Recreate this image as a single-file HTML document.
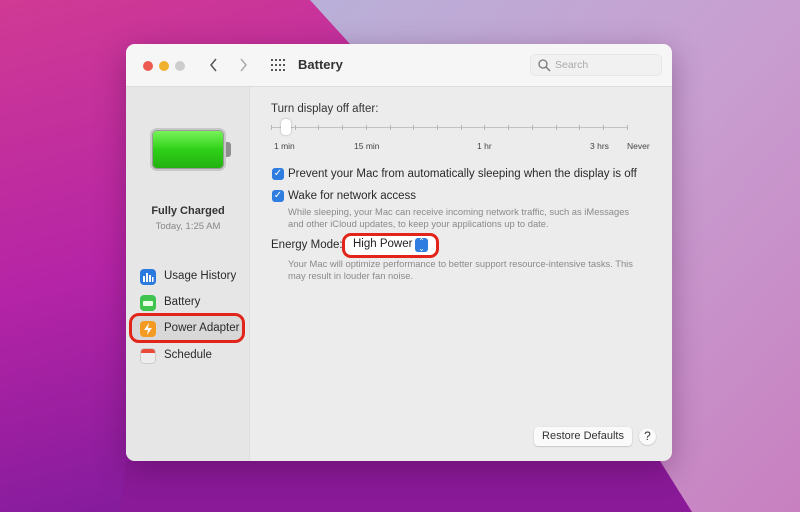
<!DOCTYPE html>
<html><head><meta charset="utf-8"><style>
*{margin:0;padding:0;box-sizing:border-box}
body{width:800px;height:512px;overflow:hidden;position:relative;font-family:"Liberation Sans",sans-serif;color:#2a2a2a}
.abs{position:absolute}
.win{left:126px;top:44px;width:546px;height:417px;border-radius:9px;background:#ececec;overflow:hidden;box-shadow:0 8px 30px rgba(60,0,60,.35)}
.title{left:0;top:0;width:546px;height:43px;background:#f6f6f6;border-bottom:1px solid #dcdcdc}
.side{left:0;top:43px;width:124px;height:374px;background:#e6e6e6;border-right:1px solid #dedede}
.t13{font-size:11.5px;white-space:nowrap}
.g{color:#8a8a8a;font-size:9.4px;line-height:12px;white-space:nowrap}
.cb{width:12px;height:12px;border-radius:3px;background:#2f7de1;color:#fff;font-size:10px;line-height:12px;text-align:center}
.tick{width:1px;height:5px;background:#b5b5b5;top:125px}
.lbl{font-size:8.5px;color:#444;top:141px;white-space:nowrap}
.ic{width:16px;height:16px;border-radius:4px}
</style></head><body>
<svg class="abs" style="left:0;top:0" width="800" height="512">
<defs>
<linearGradient id="a" x1="0" y1="0" x2="0.4" y2="1"><stop offset="0" stop-color="#d03a94"/><stop offset=".5" stop-color="#b524a6"/><stop offset="1" stop-color="#7a1a9a"/></linearGradient>
<linearGradient id="b" x1="0" y1="0" x2="1" y2="1"><stop offset="0" stop-color="#b9b0d8"/><stop offset=".5" stop-color="#c89ed0"/><stop offset="1" stop-color="#c880c0"/></linearGradient>
</defs>
<rect width="800" height="512" fill="url(#a)"/>
<polygon points="310,0 800,0 800,512 690,512 660,461 400,400 350,44" fill="url(#b)"/>
<polygon points="126,461 660,461 692,512 120,512" fill="#8a1a98"/>
</svg>
<div class="abs win">
 <div class="abs title">
  <div class="abs" style="left:17px;top:17px;width:10px;height:10px;border-radius:5px;background:#ec5a52"></div>
  <div class="abs" style="left:33px;top:17px;width:10px;height:10px;border-radius:5px;background:#f0b12f"></div>
  <div class="abs" style="left:49px;top:17px;width:10px;height:10px;border-radius:5px;background:#cdcdcd"></div>
  <svg class="abs" style="left:82px;top:13px" width="40" height="16"><path d="M8 2 L3 8 L8 14" stroke="#555" stroke-width="1.5" fill="none"/><path d="M33 2 L38 8 L33 14" stroke="#aaa" stroke-width="1.5" fill="none"/></svg>
  <svg class="abs" style="left:145px;top:15px" width="14" height="12" fill="#555"><g><rect x="0" y="0" width="2" height="2"/><rect x="4" y="0" width="2" height="2"/><rect x="8" y="0" width="2" height="2"/><rect x="12" y="0" width="2" height="2"/><rect x="0" y="5" width="2" height="2"/><rect x="4" y="5" width="2" height="2"/><rect x="8" y="5" width="2" height="2"/><rect x="12" y="5" width="2" height="2"/><rect x="0" y="10" width="2" height="2"/><rect x="4" y="10" width="2" height="2"/><rect x="8" y="10" width="2" height="2"/><rect x="12" y="10" width="2" height="2"/></g></svg>
  <div class="abs" style="left:172px;top:13px;font-size:13px;font-weight:bold;color:#333">Battery</div>
  <div class="abs" style="left:404px;top:10px;width:132px;height:22px;border-radius:5px;background:#f1f1f1;border:1px solid #e6e6e6"></div>
  <svg class="abs" style="left:412px;top:15px" width="13" height="13"><circle cx="5" cy="5" r="4" stroke="#777" stroke-width="1.3" fill="none"/><path d="M8 8 L12 12" stroke="#777" stroke-width="1.4"/></svg>
  <div class="abs" style="left:429px;top:15px;font-size:10.5px;color:#aaa">Search</div>
 </div>
 <div class="abs side">
  <div class="abs" style="left:24px;top:41px;width:76px;height:43px;border-radius:7px;background:linear-gradient(#7df55e,#2fd018 50%,#23b010);border:2px solid #c8c8c8;box-shadow:inset 0 0 0 1px #9a9a9a"></div>
  <div class="abs" style="left:100px;top:55px;width:5px;height:15px;border-radius:0 3px 3px 0;background:#8e8e8e"></div>
  <div class="abs" style="left:0;width:124px;top:118px;text-align:center;font-size:11px;font-weight:bold;color:#333">Fully Charged</div>
  <div class="abs" style="left:0;width:124px;top:134px;text-align:center;font-size:9.5px;color:#888">Today, 1:25 AM</div>
  <div class="abs" style="left:3px;top:226px;width:116px;height:30px;border:3.5px solid #e2251a;border-radius:10px;background:#d8d8d8"></div>
  <div class="abs ic" style="left:14px;top:182px;background:#2b7ae0"><svg width="16" height="16"><g fill="#fff"><rect x="3" y="7" width="2" height="6"/><rect x="6" y="4" width="2" height="9"/><rect x="9" y="6" width="2" height="7"/><rect x="12" y="8" width="1.5" height="5"/></g></svg></div>
  <div class="abs t13" style="left:38px;top:183px">Usage History</div>
  <div class="abs ic" style="left:14px;top:208px;background:#3fc54f"><div class="abs" style="left:3px;top:6px;width:10px;height:5px;background:#e8ffe8;border-radius:1px"></div></div>
  <div class="abs t13" style="left:38px;top:209px">Battery</div>
  <div class="abs ic" style="left:14px;top:234px;background:#f39a22"><svg width="16" height="16"><path d="M9 2 L4 9 H8 L7 14 L12 7 H8 Z" fill="#fff"/></svg></div>
  <div class="abs t13" style="left:38px;top:235px">Power Adapter</div>
  <div class="abs ic" style="left:14px;top:261px;background:#eee;border:1px solid #ccc"><div style="height:4px;background:#e84a3c;border-radius:3px 3px 0 0"></div></div>
  <div class="abs t13" style="left:38px;top:262px">Schedule</div>
 </div>
 <div class="abs" style="left:145px;top:59px;font-size:11.5px;color:#333">Turn display off after:</div>
 <div class="abs" style="left:145px;top:83px;width:356px;height:1px;background:#c2c2c2"></div>
</div>
<div class="abs" style="left:281px;top:119px;width:10px;height:16px;border-radius:4px;background:#fff;box-shadow:0 0 2px rgba(0,0,0,.3)"></div>
<div class="abs lbl" style="left:274px">1 min</div>
<div class="abs lbl" style="left:354px">15 min</div>
<div class="abs lbl" style="left:477px">1 hr</div>
<div class="abs lbl" style="left:590px">3 hrs</div>
<div class="abs lbl" style="left:627px">Never</div>
<div class="abs cb" style="left:272px;top:168px">✓</div>
<div class="abs t13" style="left:288px;top:168px">Prevent your Mac from automatically sleeping when the display is off</div>
<div class="abs cb" style="left:272px;top:190px">✓</div>
<div class="abs t13" style="left:288px;top:190px">Wake for network access</div>
<div class="abs g" style="left:288px;top:206px">While sleeping, your Mac can receive incoming network traffic, such as iMessages<br>and other iCloud updates, to keep your applications up to date.</div>
<div class="abs t13" style="left:271px;top:239px">Energy Mode:</div>
<div class="abs" style="left:342px;top:233px;width:97px;height:25px;border:3.5px solid #e2251a;border-radius:9px;background:#fff"></div>
<div class="abs t13" style="left:353px;top:238px;color:#222">High Power</div>
<div class="abs" style="left:415px;top:238px;width:13px;height:14px;border-radius:3px;background:#2f7de1;color:#fff;font-size:8px;line-height:7px;text-align:center">⌃<br>⌄</div>
<div class="abs g" style="left:288px;top:258px">Your Mac will optimize performance to better support resource-intensive tasks. This<br>may result in louder fan noise.</div>
<div class="abs" style="left:534px;top:427px;width:98px;height:19px;border-radius:4px;background:#fafafa;box-shadow:0 0.5px 1.5px rgba(0,0,0,.25);font-size:11px;text-align:center;line-height:19px;color:#333">Restore Defaults</div>
<div class="abs" style="left:639px;top:428px;width:17px;height:17px;border-radius:9px;background:#fafafa;box-shadow:0 0.5px 1.5px rgba(0,0,0,.25);font-size:12px;text-align:center;line-height:17px;color:#333">?</div>
<div class="abs tick" style="left:271px"></div><div class="abs tick" style="left:295px"></div><div class="abs tick" style="left:318px"></div><div class="abs tick" style="left:342px"></div><div class="abs tick" style="left:366px"></div><div class="abs tick" style="left:390px"></div><div class="abs tick" style="left:413px"></div><div class="abs tick" style="left:437px"></div><div class="abs tick" style="left:461px"></div><div class="abs tick" style="left:484px"></div><div class="abs tick" style="left:508px"></div><div class="abs tick" style="left:532px"></div><div class="abs tick" style="left:556px"></div><div class="abs tick" style="left:579px"></div><div class="abs tick" style="left:603px"></div><div class="abs tick" style="left:627px"></div>
</body></html>
